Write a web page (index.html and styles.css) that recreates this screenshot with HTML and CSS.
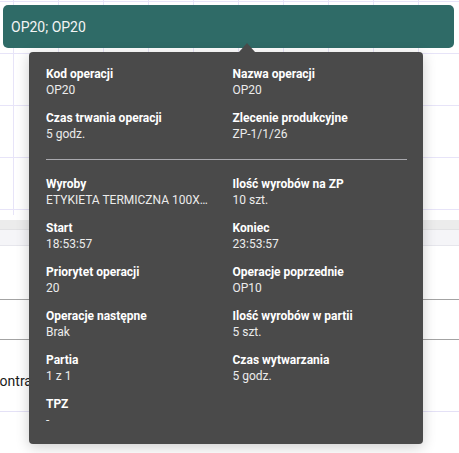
FILE: index.html
```html
<!DOCTYPE html>
<html lang="pl">
<head>
<meta charset="utf-8">
<title>Operacja OP20</title>
<link rel="stylesheet" href="styles.css">
</head>
<body>
<div class="page">
  <div class="grid"></div>
  <div class="spacer"></div>
  <div class="band-dark"></div>
  <div class="band-light"></div>
  <div class="row row-a"></div>
  <div class="row row-b"></div>
  <div class="row row-c"><span class="row-text">Kontrahent</span></div>

  <div class="bar">OP20; OP20</div>

  <div class="tooltip">
    <div class="section">
      <div class="field"><div class="label">Kod operacji</div><div class="value">OP20</div></div>
      <div class="field"><div class="label">Nazwa operacji</div><div class="value">OP20</div></div>
      <div class="field"><div class="label">Czas trwania operacji</div><div class="value">5 godz.</div></div>
      <div class="field"><div class="label">Zlecenie produkcyjne</div><div class="value">ZP-1/1/26</div></div>
    </div>
    <div class="divider"></div>
    <div class="section">
      <div class="field"><div class="label">Wyroby</div><div class="value trunc">ETYKIETA TERMICZNA 100X150 MM</div></div>
      <div class="field"><div class="label">Ilość wyrobów na ZP</div><div class="value">10 szt.</div></div>
      <div class="field"><div class="label">Start</div><div class="value">18:53:57</div></div>
      <div class="field"><div class="label">Koniec</div><div class="value">23:53:57</div></div>
      <div class="field"><div class="label">Priorytet operacji</div><div class="value">20</div></div>
      <div class="field"><div class="label">Operacje poprzednie</div><div class="value">OP10</div></div>
      <div class="field"><div class="label">Operacje następne</div><div class="value">Brak</div></div>
      <div class="field"><div class="label">Ilość wyrobów w partii</div><div class="value">5 szt.</div></div>
      <div class="field"><div class="label">Partia</div><div class="value">1 z 1</div></div>
      <div class="field"><div class="label">Czas wytwarzania</div><div class="value">5 godz.</div></div>
      <div class="field"><div class="label">TPZ</div><div class="value">-</div></div>
    </div>
  </div>
</div>
</body>
</html>
```

FILE: styles.css
```css
html, body {
  margin: 0;
  padding: 0;
  background: #ffffff;
}
body {
  width: 459px;
  height: 453px;
  overflow: hidden;
  font-family: Roboto, "Liberation Sans", sans-serif;
}
.page {
  position: relative;
  width: 459px;
  height: 453px;
  overflow: hidden;
}
.grid {
  height: 215px;
  background-image:
    linear-gradient(to right, #e7e4f8 1px, transparent 1px),
    linear-gradient(to bottom, #e7e4f8 1px, transparent 1px);
  background-size: 45px 100%, 100% 52px;
  background-position: 13px 0, 0 1px;
}
.spacer {
  height: 5px;
}
.band-dark {
  height: 9px;
  background: #ececec;
  border-bottom: 1px solid #e2e2e4;
}
.band-light {
  height: 15px;
  background: #f5f5f8;
  border-bottom: 1px solid #e6e6ec;
}
.row {
  border-bottom: 1px solid #a3a3a3;
}
.row-a { height: 53px; }
.row-b { height: 39px; }
.row-c {
  height: 72px;
  border-bottom: 1px solid #e4e1f6;
  display: flex;
  align-items: center;
  padding-top: 10px;
  box-sizing: border-box;
}
.row-text {
  font-size: 14px;
  color: #1a1a1a;
  text-indent: -9px;
  display: block;
  white-space: nowrap;
}
.bar {
  position: absolute;
  left: 3px;
  top: 5px;
  width: 451px;
  height: 43px;
  box-sizing: border-box;
  border-radius: 5px;
  background: #2f6b67;
  color: #f4f4f4;
  font-size: 14px;
  display: flex;
  align-items: center;
  padding-left: 8px;
}
.tooltip {
  position: absolute;
  left: 29px;
  top: 52px;
  width: 394px;
  height: 392px;
  box-sizing: border-box;
  padding: 14px 16px 15px 17px;
  background: #4a4a4a;
  border-radius: 4px;
  box-shadow: 0 3px 14px rgba(0, 0, 0, 0.2);
}
.tooltip::before {
  content: "";
  position: absolute;
  top: -9px;
  left: 210px;
  border-left: 8px solid transparent;
  border-right: 8px solid transparent;
  border-bottom: 9px solid #4a4a4a;
}
.section {
  display: grid;
  grid-template-columns: 1fr 1fr;
  column-gap: 12px;
  row-gap: 12px;
}
.field {
  min-width: 0;
}
.label {
  font-size: 12px;
  line-height: 16px;
  font-weight: 700;
  color: #ffffff;
  white-space: nowrap;
}
.value {
  font-size: 12px;
  line-height: 16px;
  color: #ececec;
  white-space: nowrap;
}
.trunc {
  overflow: hidden;
  text-overflow: ellipsis;
  padding-right: 10px;
}
.divider {
  height: 1px;
  background: #a9a9ae;
  margin: 17px 0 16px;
}
```
